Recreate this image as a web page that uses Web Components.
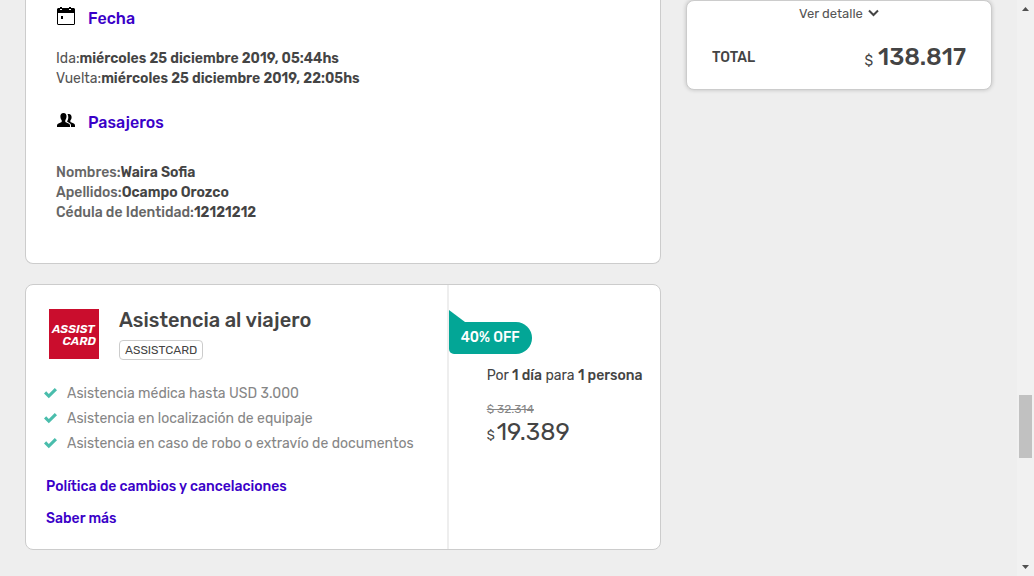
<!DOCTYPE html>
<html lang="es">
<head>
<meta charset="utf-8">
<meta name="viewport" content="width=device-width, initial-scale=1">
<title>Detalle de compra</title>
<style>
  html { height: 100%; }
  body {
    margin: 0;
    height: 100%;
    overflow: hidden;
    background: #eee;
    color: #444;
    font-family: Rubik, Roboto, "Noto Sans", sans-serif;
    font-size: 14px;
    line-height: 20px;
  }
</style>
</head>
<body>
<checkout-page>
  <trip-card>
    <info-section icon="calendar" heading="Fecha">
      <detail-line label="Ida:">miércoles 25 diciembre 2019, 05:44hs</detail-line>
      <detail-line label="Vuelta:">miércoles 25 diciembre 2019, 22:05hs</detail-line>
    </info-section>
    <info-section icon="people" heading="Pasajeros" spacious>
      <detail-line label="Nombres:" medium>Waira Sofia</detail-line>
      <detail-line label="Apellidos:" medium>Ocampo Orozco</detail-line>
      <detail-line label="Cédula de Identidad:" medium>12121212</detail-line>
    </info-section>
  </trip-card>
  <assist-card>
    <assist-logo slot="logo"></assist-logo>
    <span slot="title">Asistencia al viajero</span>
    <span slot="tag">ASSISTCARD</span>
    <check-item slot="benefits">Asistencia médica hasta USD 3.000</check-item>
    <check-item slot="benefits">Asistencia en localización de equipaje</check-item>
    <check-item slot="benefits">Asistencia en caso de robo o extravío de documentos</check-item>
    <offer-price slot="price" before="32.314" now="19.389">
      <offer-badge slot="badge">40% OFF</offer-badge>
      Por <b>1 día</b> para <b>1 persona</b>
    </offer-price>
  </assist-card>
  <total-card slot="aside">138.817</total-card>
</checkout-page>

<script>
const define = (name, html, setup) => {
  const template = document.createElement('template');
  template.innerHTML = html;
  customElements.define(name, class extends HTMLElement {
    constructor() {
      super();
      this.attachShadow({ mode: 'open' }).append(template.content.cloneNode(true));
    }
    connectedCallback() {
      if (setup) setup(this, this.shadowRoot);
    }
  });
};

define('checkout-page', `
  <style>
    :host { display: flex; height: 100%; }
    .content {
      flex: 1; min-width: 0;
      display: grid; grid-template-columns: minmax(0, 1fr) 306px;
      gap: 25px; align-items: start; padding: 0 25px;
    }
    main { display: flex; flex-direction: column; gap: 20px; }
  </style>
  <div class="content">
    <main><slot></slot></main>
    <aside><slot name="aside"></slot></aside>
  </div>
  <scroll-track></scroll-track>`);

define('trip-card', `
  <style>
    :host {
      display: flex; flex-direction: column; gap: 24px;
      padding: 9px 30px 40px;
      background: #fff; border: 1px solid #ccc; border-top: 0;
      border-radius: 0 0 8px 8px;
    }
  </style>
  <slot></slot>`);

const icons = {
  calendar: `<path fill-rule="evenodd" d="M1 1h2V0h2v1h7V0h2v1h3l1 1v15l-1 1H1l-1-1V2zM1 6v11h16V6zM3 2v1h2V2zM12 2v1h2V2z"/><path d="M4 9h2v3H4z"/>`,
  people: `<g transform="translate(0 1)"><path d="M6.500 1C8.600 1 9.700 2.500 9.500 4.800 9.400 6.300 8.800 7.500 8.300 8.200v1.900l3.700 1.700q1 .6 1 1.800V15H0v-1.400q0-1.200 1-1.800l3.700-1.700V8.200C4 7.500 3.500 6.300 3.400 4.800 3.200 2.500 4.400 1 6.500 1z"/><path d="M10.500 2.300C13 1.400 14.700 2.900 14.600 5.200c0 1.300-.5 2.300-1.200 3v1.900l3.400 1.500q1.200.6 1.200 1.900V15h-4v-1.400c0-1.400-.6-2.200-1.700-2.700L10 9.400c.8-1 1.300-2.600 1.300-4.200 0-1-.3-2.200-.8-2.900z"/></g>`
};

define('info-section', `
  <style>
    :host { display: block; }
    h2 {
      display: flex; align-items: center; gap: 13px;
      height: 20px; margin: 0 0 20px; padding-left: 1px; color: #3a00c8;
      font-size: 16px; line-height: 20px; font-weight: 500;
    }
    :host([spacious]) h2 { margin-bottom: 30px; }
    svg { flex: none; width: 18px; height: 18px; padding-bottom: 6px; fill: #000; }
  </style>
  <h2><svg viewBox="0 0 18 18" aria-hidden="true"></svg><span></span></h2>
  <slot></slot>`,
  (host, root) => {
    root.querySelector('svg').innerHTML = icons[host.getAttribute('icon')];
    root.querySelector('span').textContent = host.getAttribute('heading');
  });

define('detail-line', `
  <style>
    :host { display: block; color: #555; }
    :host([medium]) { font-weight: 500; color: #666; }
    strong { font-weight: 600; color: #444; }
  </style>
  <span></span><strong><slot></slot></strong>`,
  (host, root) => { root.querySelector('span').textContent = host.getAttribute('label'); });

define('assist-card', `
  <style>
    :host {
      display: grid; grid-template-columns: minmax(0, 2fr) minmax(0, 1fr);
      background: #fff; border: 1px solid #ccc; border-radius: 8px;
    }
    .info { padding: 24px 18px 20px; border-right: 2px solid #eee; }
    header { display: flex; gap: 20px; height: 50px; padding-left: 5px; }
    h2 { margin: 0 0 9px; font-size: 20px; line-height: 22px; font-weight: 500; }
    .tag {
      display: block; width: fit-content; padding: 0 5px;
      border: 1px solid #ccc; border-radius: 4px;
      font-size: 12px; line-height: 18px;
    }
    ul { margin: 22px 0 0; padding: 0; }
    nav {
      display: flex; flex-direction: column; align-items: flex-start; gap: 12px;
      padding: 21px 2px 0;
    }
    a { color: #3a00c8; font-weight: 500; text-decoration: none; }
  </style>
  <div class="info">
    <header>
      <slot name="logo"></slot>
      <div><h2><slot name="title"></slot></h2><span class="tag"><slot name="tag"></slot></span></div>
    </header>
    <ul role="list"><slot name="benefits"></slot></ul>
    <nav><a href="#politica">Política de cambios y cancelaciones</a><a href="#mas">Saber más</a></nav>
  </div>
  <slot name="price"></slot>`);

define('assist-logo', `
  <style>
    :host {
      display: flex; flex-direction: column; justify-content: center;
      flex: none; box-sizing: border-box; width: 50px; height: 50px; padding: 2px 3px 0;
      background: #ca0d2d; color: #fff;
      font: italic 600 12px/12px Rubik, Roboto, sans-serif;
    }
    span + span { align-self: flex-end; }
  </style>
  <span>ASSIST</span><span>CARD</span>`);

define('check-item', `
  <style>
    :host { display: flex; align-items: center; gap: 10px; line-height: 25px; color: #868686; }
    svg { flex: none; width: 13px; height: 12px; padding-bottom: 2px; fill: #4abdac; }
  </style>
  <svg viewBox="0 0 13 12" aria-hidden="true"><path d="M0 6.500 2.200 4.300 4.800 6.900 10.800 1 13 3.200 4.800 11.300z"/></svg>
  <slot></slot>`,
  host => host.setAttribute('role', 'listitem'));

define('offer-price', `
  <style>
    :host { display: block; padding-top: 37px; }
    .body { padding: 12px 0 0 38px; }
    p { margin: 0; }
    ::slotted(b) { font-weight: 500; }
    s { display: block; margin-top: 13px; font-size: 12px; line-height: 20px; color: #868686; }
    .now { display: flex; align-items: baseline; gap: 2px; font-size: 24px; line-height: 26px; }
    small { font-size: 13px; }
  </style>
  <slot name="badge"></slot>
  <div class="body">
    <p><slot></slot></p>
    <s></s>
    <div class="now"><small>$</small><span></span></div>
  </div>`,
  (host, root) => {
    root.querySelector('s').textContent = '$ ' + host.getAttribute('before');
    root.querySelector('.now span').textContent = host.getAttribute('now');
  });

define('offer-badge', `
  <style>
    :host {
      display: block; position: relative; width: fit-content;
      padding: 0 12px; background: #03a696; color: #fff;
      border-radius: 0 16px 16px 5px;
      font-weight: 500; line-height: 32px;
    }
    svg { position: absolute; left: 0; bottom: 100%; width: 16px; height: 12px; fill: #03a696; }
  </style>
  <svg viewBox="0 0 16 12" aria-hidden="true"><path d="M0 0 16 12H0z"/></svg>
  <slot></slot>`);

define('total-card', `
  <style>
    :host {
      display: block; box-sizing: border-box; padding: 3px 25px 13px;
      background: #fff; border: 1px solid #ccc; border-radius: 8px;
      box-shadow: 0 0 4px rgba(0, 0, 0, .2);
    }
    button {
      display: flex; align-items: center; gap: 5px;
      margin: 0 auto; padding: 0; border: 0; background: none;
      color: #555; font: inherit; font-size: 13px; line-height: 20px;
    }
    svg { width: 11px; height: 8px; padding-bottom: 2px; fill: none; stroke: #444; stroke-width: 2; }
    .total { display: flex; justify-content: space-between; align-items: center; margin-top: 16px; }
    .label { font-weight: 500; }
    .amount { display: flex; align-items: baseline; gap: 5px; padding-top: 2px; font-size: 24px; line-height: 30px; font-weight: 500; }
    small { font-size: 14px; font-weight: 400; }
  </style>
  <button type="button">Ver detalle
    <svg viewBox="0 0 11 8" aria-hidden="true"><path d="m1 1.500 4.500 4.500L10 1.500"/></svg>
  </button>
  <div class="total">
    <span class="label">TOTAL</span>
    <span class="amount"><small>$</small><slot></slot></span>
  </div>`);

define('scroll-track', `
  <style>
    :host {
      display: grid; grid-template-rows: 17px 378fr 63fr 101fr 17px;
      flex: none; width: 17px; background: #f1f1f1;
    }
    svg { width: 17px; height: 17px; fill: #505050; }
    .thumb { grid-row: 3; margin: 0 2px; background: #c1c1c1; }
    .down { grid-row: 5; }
  </style>
  <svg viewBox="0 0 17 17" aria-hidden="true"><path d="M5 11 8.500 7 12 11z"/></svg>
  <div class="thumb"></div>
  <svg class="down" viewBox="0 0 17 17" aria-hidden="true"><path d="M5 6h7L8.500 10z"/></svg>`);
</script>
</body>
</html>
